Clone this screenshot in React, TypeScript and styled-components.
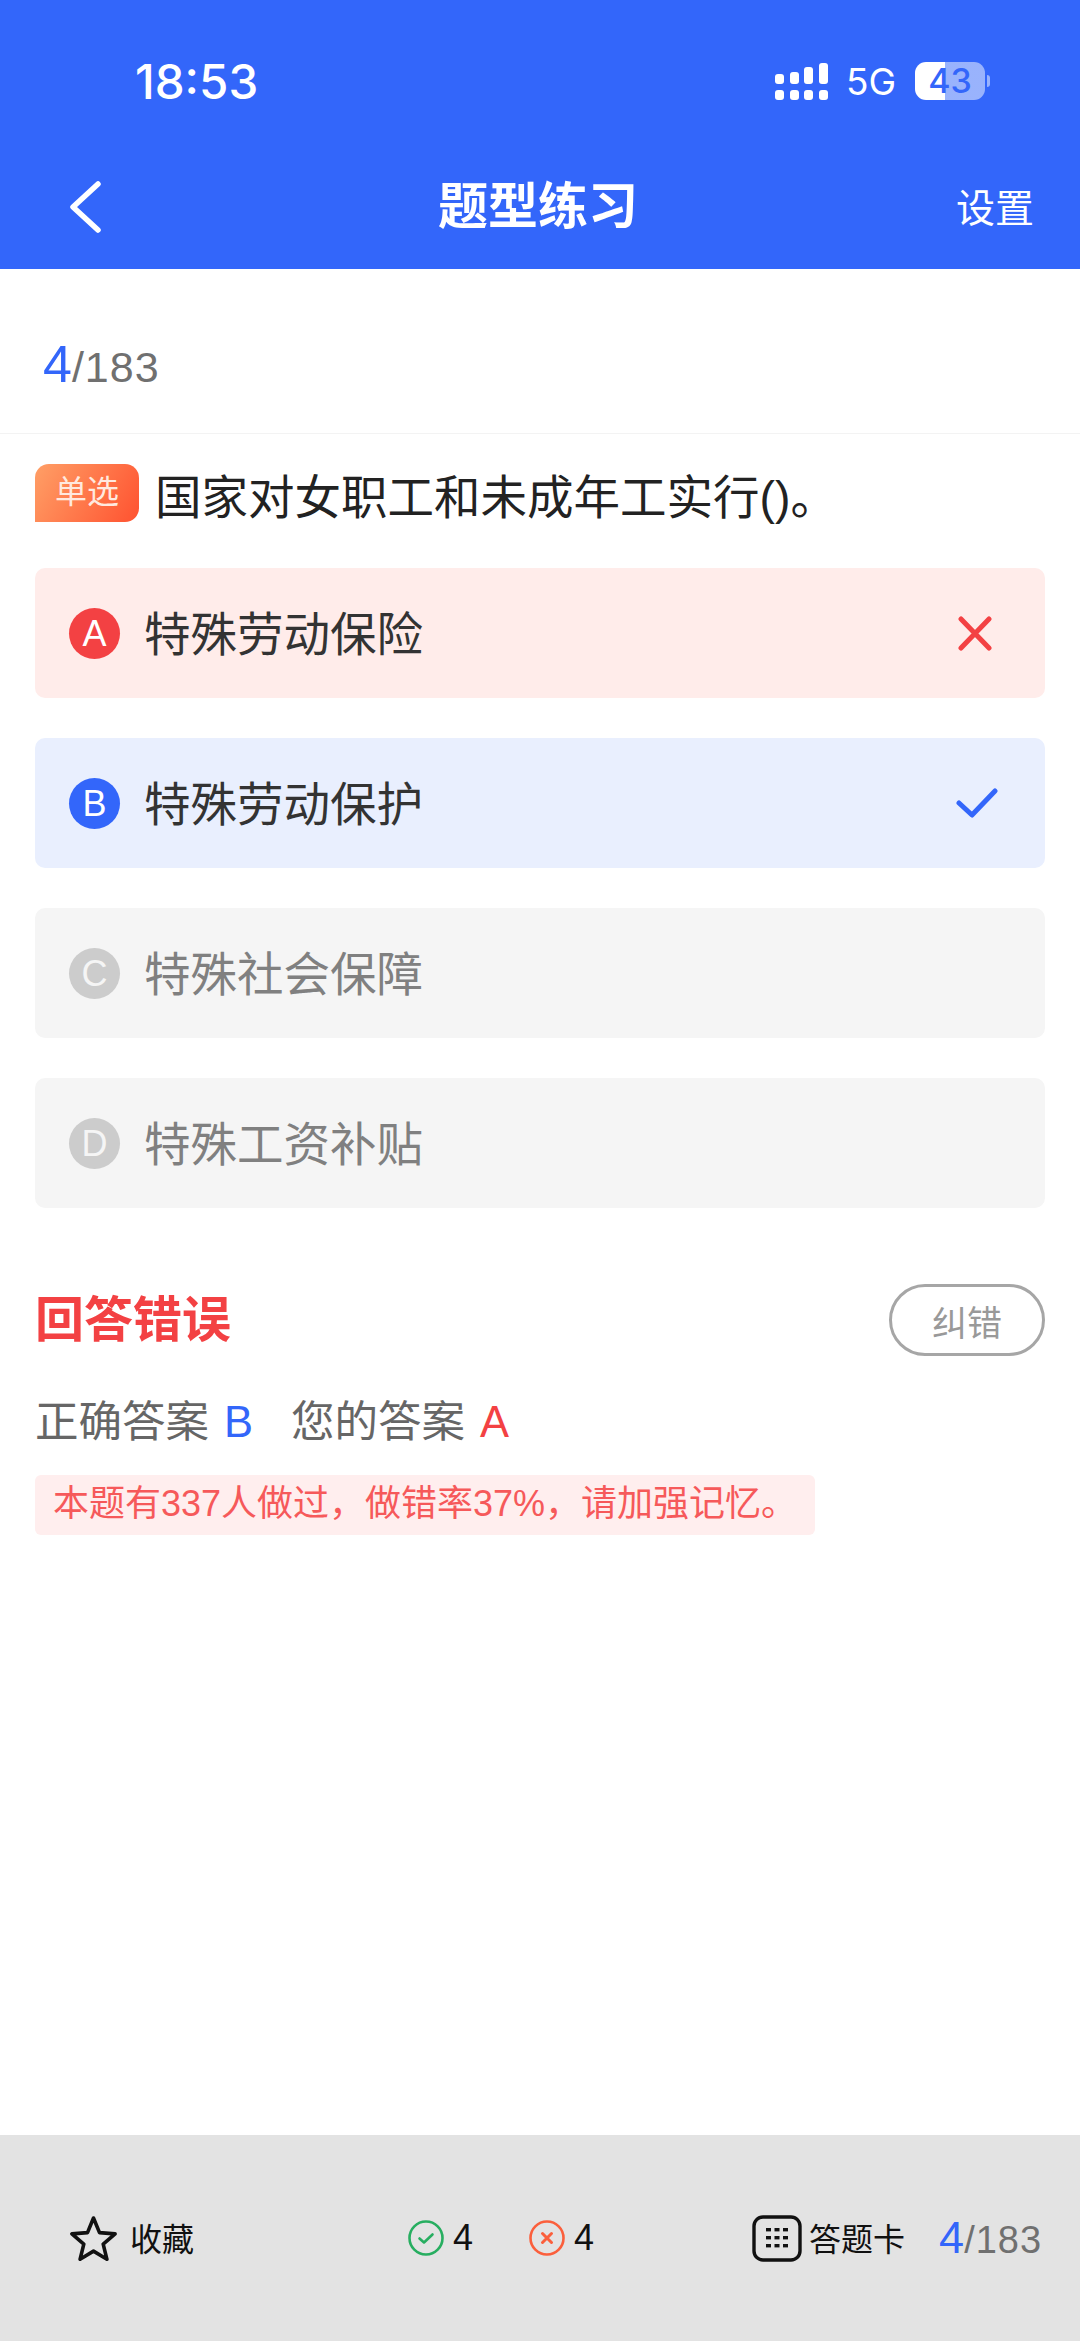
import styled, { createGlobalStyle } from 'styled-components'

const GlobalStyle = createGlobalStyle`
  html, body {
    margin: 0;
    padding: 0;
    background: #fff;
  }
  * {
    box-sizing: border-box;
  }
  svg {
    display: block;
    flex: none;
  }
`

const FONT = `"Liberation Sans", "Noto Sans CJK SC", sans-serif`

const Color = {
  blue: '#3366fa',
  red: '#f34143',
  grey: '#666666',
  text: '#333333',
}

const Page = styled.div`
  width: 1080px;
  height: 2341px;
  display: flex;
  flex-direction: column;
  overflow: hidden;
  font-family: ${FONT};
  background: #fff;
`

const Header = styled.header`
  height: 269px;
  flex: none;
  background: ${Color.blue};
  color: #fff;
`

const StatusBar = styled.div`
  height: 162px;
  padding: 0 90px 0 135px;
  display: flex;
  align-items: center;
  justify-content: space-between;
`

const Time = styled.span`
  font-family: Inter, sans-serif;
  font-size: 47.5px;
  font-weight: 500;
`

const StatusRight = styled.div`
  display: flex;
  align-items: center;
`

const NetworkLabel = styled.span`
  font-family: Inter, sans-serif;
  font-size: 37px;
  margin: 0 19px 0 18px;
`

const Battery = styled.div`
  width: 70px;
  height: 38px;
  border-radius: 11px;
  background: linear-gradient(90deg, #fff 0 43%, rgba(255, 255, 255, 0.5) 43%);
  color: ${Color.blue};
  font-family: Inter, sans-serif;
  font-size: 34px;
  font-weight: 500;
  line-height: 38px;
  text-align: center;
`

const BatteryTip = styled.div`
  width: 3px;
  height: 12px;
  margin-left: 2px;
  border-radius: 0 3px 3px 0;
  background: rgba(255, 255, 255, 0.5);
`

const NavBar = styled.nav`
  height: 107px;
  padding: 0 46px 18px 69px;
  display: flex;
  align-items: center;
  justify-content: space-between;
`

const NavTitle = styled.h1`
  margin: 0 0 0 19px;
  font-size: 50px;
  font-weight: 700;
  line-height: 1;
`

const NavAction = styled.span`
  margin-bottom: 4px;
  font-size: 39px;
`

const ProgressRow = styled.div`
  height: 165px;
  padding: 65px 0 0 43px;
  display: flex;
  align-items: baseline;
  border-bottom: 1px solid #f3f3f3;
`

const Current = styled.span<{ $size: number }>`
  font-size: ${(p) => p.$size}px;
  color: ${Color.blue};
`

const Total = styled.span<{ $size: number }>`
  font-size: ${(p) => p.$size}px;
  letter-spacing: 1px;
  color: #707070;
`

const Question = styled.div`
  padding: 30px 35px 0;
  display: flex;
  align-items: center;
  gap: 16px;
`

const Tag = styled.span`
  width: 104px;
  height: 58px;
  flex: none;
  border-radius: 14px 14px 14px 0;
  background: linear-gradient(120deg, #ff9f66, #ff5230);
  color: #ffe9df;
  font-size: 32px;
  line-height: 57px;
  text-align: center;
`

const QuestionText = styled.p`
  margin: 0;
  padding-top: 5px;
  height: 58px;
  font-size: 46.5px;
  line-height: 58px;
  color: #222;
  white-space: nowrap;
`

const Options = styled.div`
  margin-top: 46px;
  padding: 0 35px;
  display: flex;
  flex-direction: column;
  gap: 40px;
`

type Tone = 'wrong' | 'right' | 'idle'

const optionBg: Record<Tone, string> = {
  wrong: '#ffecea',
  right: '#e9effe',
  idle: '#f5f5f5',
}

const badgeBg: Record<Tone, string> = {
  wrong: Color.red,
  right: Color.blue,
  idle: '#cccccc',
}

const Option = styled.div<{ $tone: Tone }>`
  height: 130px;
  padding: 0 47px 0 34px;
  display: flex;
  align-items: center;
  border-radius: 10px;
  background: ${(p) => optionBg[p.$tone]};
`

const Badge = styled.span<{ $tone: Tone }>`
  width: 51px;
  height: 51px;
  flex: none;
  border-radius: 50%;
  background: ${(p) => badgeBg[p.$tone]};
  color: ${(p) => (p.$tone === 'idle' ? '#f5f5f5' : '#fff')};
  font-size: 36px;
  line-height: 51px;
  text-align: center;
`

const OptionText = styled.span<{ $tone: Tone }>`
  margin-left: 24px;
  padding-bottom: 6px;
  flex: 1;
  font-size: 46.5px;
  color: ${(p) => (p.$tone === 'idle' ? '#808080' : Color.text)};
`

const CrossSlot = styled.span`
  margin-right: 6px;
`

const Result = styled.section`
  margin-top: 76px;
  padding: 0 35px;
`

const ResultHead = styled.div`
  display: flex;
  align-items: center;
  justify-content: space-between;
`

const ResultTitle = styled.h2`
  margin: 0;
  font-size: 49px;
  font-weight: 700;
  line-height: 72px;
  color: ${Color.red};
`

const ReportButton = styled.button`
  width: 156px;
  height: 72px;
  padding: 0;
  border: 3px solid #a6a6a6;
  border-radius: 36px;
  background: #fff;
  color: #999;
  font-family: inherit;
  font-size: 35px;
`

const AnswerRow = styled.div`
  margin-top: 34px;
  display: flex;
  align-items: center;
  font-size: 43.5px;
  line-height: 64px;
  color: ${Color.grey};
`

const AnswerLetter = styled.span<{ $color: string; $gap: number }>`
  margin: 0 ${(p) => p.$gap}px 0 15px;
  color: ${(p) => p.$color};
`

const Tip = styled.div`
  width: 780px;
  height: 60px;
  margin-top: 21px;
  padding-left: 18px;
  border-radius: 6px;
  background: #ffeeee;
  color: #f6595a;
  font-size: 36px;
  line-height: 58px;
  white-space: nowrap;
`

const Footer = styled.footer`
  height: 206px;
  margin-top: auto;
  flex: none;
  padding: 0 30px 0 70px;
  display: flex;
  align-items: center;
  background: #e3e3e3;
  color: #111;
`

const FooterItem = styled.div<{ $gap: number; $left?: number }>`
  margin-left: ${(p) => p.$left ?? 0}px;
  flex: none;
  display: flex;
  align-items: center;
  gap: ${(p) => p.$gap}px;
`

const FooterLabel = styled.span`
  padding-bottom: 2px;
  font-size: 32px;
  white-space: nowrap;
`

const FooterCount = styled.span`
  font-size: 36px;
`

const FooterProgress = styled.div`
  margin-left: 34px;
  flex: none;
  display: flex;
  align-items: baseline;
`

const SignalIcon = () => (
  <svg width="53" height="37" viewBox="0 0 53 37" fill="#fff">
    <rect x="0" y="11" width="9" height="10" rx="3" />
    <rect x="15" y="9" width="9" height="12" rx="3" />
    <rect x="29" y="4" width="9" height="17" rx="3" />
    <rect x="44" y="0" width="9" height="21" rx="3" />
    <rect x="0" y="27" width="9" height="10" rx="3" />
    <rect x="15" y="27" width="9" height="10" rx="3" />
    <rect x="29" y="27" width="9" height="10" rx="3" />
    <rect x="44" y="27" width="9" height="10" rx="3" />
  </svg>
)

const BackIcon = () => (
  <svg width="32" height="52" viewBox="0 0 32 52" fill="none" stroke="#fff" strokeWidth="5.5" strokeLinecap="round" strokeLinejoin="round">
    <path d="M29 3 4 26l25 23" />
  </svg>
)

const CrossIcon = () => (
  <svg width="34" height="35" viewBox="0 0 34 35" fill="none" stroke={Color.red} strokeWidth="5" strokeLinecap="round">
    <path d="M3 3l28 29M31 3 3 32" />
  </svg>
)

const CheckIcon = () => (
  <svg width="42" height="30" viewBox="0 0 42 30" fill="none" stroke={Color.blue} strokeWidth="5" strokeLinecap="round" strokeLinejoin="round">
    <path d="M3 15l13 12L39 3" />
  </svg>
)

const StarIcon = () => (
  <svg width="47" height="46" viewBox="0 0 47 46" fill="none" stroke="#111" strokeWidth="3.6" strokeLinejoin="round">
    <path d="M23.5 3l6 14.6 15.6 1.3-11.9 10.2 3.7 15.1-13.4-8.1-13.4 8.1 3.7-15.1L1.9 18.9l15.6-1.3z" />
  </svg>
)

const RightCircleIcon = () => (
  <svg width="36" height="36" viewBox="0 0 36 36" fill="none" stroke="#27ae60" strokeLinecap="round" strokeLinejoin="round">
    <circle cx="18" cy="18" r="16.5" strokeWidth="2.6" />
    <path d="M11.5 18.5l4.5 4 8.5-8" strokeWidth="2.6" />
  </svg>
)

const WrongCircleIcon = () => (
  <svg width="36" height="36" viewBox="0 0 36 36" fill="none" stroke="#fb5f3c" strokeLinecap="round">
    <circle cx="18" cy="18" r="16.5" strokeWidth="2.6" />
    <path d="M13.5 13.5l9 9M22.5 13.5l-9 9" strokeWidth="3" />
  </svg>
)

const CardIcon = () => (
  <svg width="50" height="47" viewBox="0 0 50 47" fill="none">
    <rect x="2" y="2" width="46" height="43" rx="9" stroke="#111" strokeWidth="3.4" />
    {[14, 22, 30].map((cy) =>
      [14, 22.5, 31].map((x) => <rect key={`${x}-${cy}`} x={x} y={cy - 1} width="5" height="3.4" fill="#111" />),
    )}
  </svg>
)

const options: { letter: string; text: string; tone: Tone }[] = [
  { letter: 'A', text: '特殊劳动保险', tone: 'wrong' },
  { letter: 'B', text: '特殊劳动保护', tone: 'right' },
  { letter: 'C', text: '特殊社会保障', tone: 'idle' },
  { letter: 'D', text: '特殊工资补贴', tone: 'idle' },
]

export default function App() {
  return (
    <Page>
      <GlobalStyle />
      <Header>
        <StatusBar>
          <Time>18:53</Time>
          <StatusRight>
            <SignalIcon />
            <NetworkLabel>5G</NetworkLabel>
            <Battery>43</Battery>
            <BatteryTip />
          </StatusRight>
        </StatusBar>
        <NavBar>
          <BackIcon />
          <NavTitle>题型练习</NavTitle>
          <NavAction>设置</NavAction>
        </NavBar>
      </Header>

      <ProgressRow>
        <Current $size={52}>4</Current>
        <Total $size={43}>/183</Total>
      </ProgressRow>

      <Question>
        <Tag>单选</Tag>
        <QuestionText>国家对女职工和未成年工实行()。</QuestionText>
      </Question>

      <Options>
        {options.map((o) => (
          <Option key={o.letter} $tone={o.tone}>
            <Badge $tone={o.tone}>{o.letter}</Badge>
            <OptionText $tone={o.tone}>{o.text}</OptionText>
            {o.tone === 'wrong' && (
              <CrossSlot>
                <CrossIcon />
              </CrossSlot>
            )}
            {o.tone === 'right' && <CheckIcon />}
          </Option>
        ))}
      </Options>

      <Result>
        <ResultHead>
          <ResultTitle>回答错误</ResultTitle>
          <ReportButton>纠错</ReportButton>
        </ResultHead>
        <AnswerRow>
          正确答案
          <AnswerLetter $color={Color.blue} $gap={38}>B</AnswerLetter>
          您的答案
          <AnswerLetter $color={Color.red} $gap={0}>A</AnswerLetter>
        </AnswerRow>
        <Tip>本题有337人做过，做错率37%，请加强记忆。</Tip>
      </Result>

      <Footer>
        <FooterItem $gap={13}>
          <StarIcon />
          <FooterLabel>收藏</FooterLabel>
        </FooterItem>
        <FooterItem $gap={9} $left={214}>
          <RightCircleIcon />
          <FooterCount>4</FooterCount>
        </FooterItem>
        <FooterItem $gap={9} $left={56}>
          <WrongCircleIcon />
          <FooterCount>4</FooterCount>
        </FooterItem>
        <FooterItem $gap={7} $left={158}>
          <CardIcon />
          <FooterLabel>答题卡</FooterLabel>
        </FooterItem>
        <FooterProgress>
          <Current $size={45}>4</Current>
          <Total $size={38}>/183</Total>
        </FooterProgress>
      </Footer>
    </Page>
  )
}
